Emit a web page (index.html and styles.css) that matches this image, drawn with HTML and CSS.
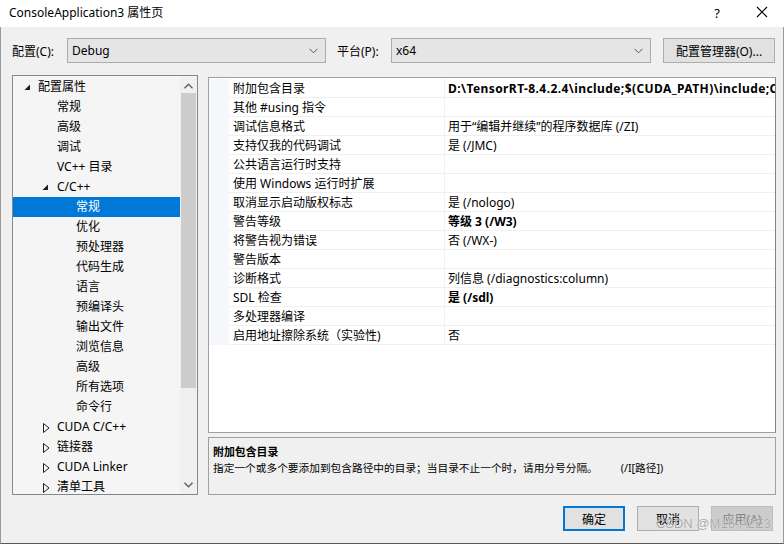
FILE: index.html
```html
<!DOCTYPE html>
<html lang="zh-CN">
<head>
<meta charset="utf-8">
<link rel="stylesheet" href="styles.css">
</head>
<body>
<div class="window">
  <div class="titlebar">
    <span class="title">ConsoleApplication3 属性页</span>
    <span class="help">?</span>
    <svg class="close" width="12" height="12" viewBox="0 0 12 12"><path d="M1 1L11 11M11 1L1 11" stroke="#000" stroke-width="1.1" fill="none"/></svg>
  </div>
  <div class="frame">
    <div class="toolbar">
      <span class="lbl lbl-cfg">配置(C):</span>
      <div class="combo combo-cfg"><span>Debug</span><svg class="chev" width="9" height="6" viewBox="0 0 9 6"><path d="M0.5 0.8L4.5 4.8L8.5 0.8" stroke="#505050" stroke-width="1" fill="none"/></svg></div>
      <span class="lbl lbl-plat">平台(P):</span>
      <div class="combo combo-plat"><span>x64</span><svg class="chev" width="9" height="6" viewBox="0 0 9 6"><path d="M0.5 0.8L4.5 4.8L8.5 0.8" stroke="#505050" stroke-width="1" fill="none"/></svg></div>
      <button class="btn btn-mgr">配置管理器(O)...</button>
    </div>
    <div class="main">
      <div class="tree">
        <ul class="items">
          <li class="l0"><svg class="exp" width="7" height="7" viewBox="0 0 7 7"><path d="M6 0.5V6H0.5Z" fill="#1e1e1e"/></svg>配置属性</li>
          <li class="l1">常规</li>
          <li class="l1">高级</li>
          <li class="l1">调试</li>
          <li class="l1">VC++ 目录</li>
          <li class="l1"><svg class="exp" width="7" height="7" viewBox="0 0 7 7"><path d="M6 0.5V6H0.5Z" fill="#1e1e1e"/></svg>C/C++</li>
          <li class="l2 sel">常规</li>
          <li class="l2">优化</li>
          <li class="l2">预处理器</li>
          <li class="l2">代码生成</li>
          <li class="l2">语言</li>
          <li class="l2">预编译头</li>
          <li class="l2">输出文件</li>
          <li class="l2">浏览信息</li>
          <li class="l2">高级</li>
          <li class="l2">所有选项</li>
          <li class="l2">命令行</li>
          <li class="l1"><svg class="col" width="7" height="10" viewBox="0 0 7 10"><path d="M0.5 0.5L6 5L0.5 9.5Z" stroke="#1e1e1e" stroke-width="1" fill="none"/></svg>CUDA C/C++</li>
          <li class="l1"><svg class="col" width="7" height="10" viewBox="0 0 7 10"><path d="M0.5 0.5L6 5L0.5 9.5Z" stroke="#1e1e1e" stroke-width="1" fill="none"/></svg>链接器</li>
          <li class="l1"><svg class="col" width="7" height="10" viewBox="0 0 7 10"><path d="M0.5 0.5L6 5L0.5 9.5Z" stroke="#1e1e1e" stroke-width="1" fill="none"/></svg>CUDA Linker</li>
          <li class="l1"><svg class="col" width="7" height="10" viewBox="0 0 7 10"><path d="M0.5 0.5L6 5L0.5 9.5Z" stroke="#1e1e1e" stroke-width="1" fill="none"/></svg>清单工具</li>
        </ul>
        <div class="vscroll">
          <svg class="arr" width="9" height="6" viewBox="0 0 9 6"><path d="M0.5 5.2L4.5 1.2L8.5 5.2" stroke="#606060" stroke-width="1.4" fill="none"/></svg>
          <div class="track"><div class="thumb"></div></div>
          <svg class="arr" width="9" height="6" viewBox="0 0 9 6"><path d="M0.5 0.8L4.5 4.8L8.5 0.8" stroke="#606060" stroke-width="1.4" fill="none"/></svg>
        </div>
      </div>
      <div class="right">
        <div class="grid">
          <div class="row"><div class="gut"></div><div class="name">附加包含目录</div><div class="val b wide">D:\TensorRT-8.4.2.4\include;$(CUDA_PATH)\include;C</div></div>
          <div class="row"><div class="gut"></div><div class="name">其他 #using 指令</div><div class="val"></div></div>
          <div class="row"><div class="gut"></div><div class="name">调试信息格式</div><div class="val">用于“编辑并继续”的程序数据库 (/ZI)</div></div>
          <div class="row"><div class="gut"></div><div class="name">支持仅我的代码调试</div><div class="val">是 (/JMC)</div></div>
          <div class="row"><div class="gut"></div><div class="name">公共语言运行时支持</div><div class="val"></div></div>
          <div class="row"><div class="gut"></div><div class="name">使用 Windows 运行时扩展</div><div class="val"></div></div>
          <div class="row"><div class="gut"></div><div class="name">取消显示启动版权标志</div><div class="val">是 (/nologo)</div></div>
          <div class="row"><div class="gut"></div><div class="name">警告等级</div><div class="val b">等级 3 (/W3)</div></div>
          <div class="row"><div class="gut"></div><div class="name">将警告视为错误</div><div class="val">否 (/WX-)</div></div>
          <div class="row"><div class="gut"></div><div class="name">警告版本</div><div class="val"></div></div>
          <div class="row"><div class="gut"></div><div class="name">诊断格式</div><div class="val">列信息 (/diagnostics:column)</div></div>
          <div class="row"><div class="gut"></div><div class="name">SDL 检查</div><div class="val b">是 (/sdl)</div></div>
          <div class="row"><div class="gut"></div><div class="name">多处理器编译</div><div class="val"></div></div>
          <div class="row"><div class="gut"></div><div class="name">启用地址擦除系统（实验性)</div><div class="val">否</div></div>
        </div>
        <div class="desc">
          <div class="desc-title">附加包含目录</div>
          <div class="desc-text"><span>指定一个或多个要添加到包含路径中的目录；当目录不止一个时，请用分号分隔。</span><span class="sw">(/I[路径])</span></div>
        </div>
      </div>
    </div>
    <div class="footer">
      <button class="btn btn-ok">确定</button>
      <button class="btn">取消</button>
      <button class="btn btn-dis">应用(A)</button>
      <span class="wm">CSDN @M16-A2E3</span>
    </div>
  </div>
</div>
</body>
</html>
```

FILE: styles.css
```css
* { box-sizing: border-box; }
html, body { margin: 0; padding: 0; }
body {
  width: 784px;
  height: 544px;
  overflow: hidden;
  font-family: "Segoe UI", "Noto Sans", "Noto Sans CJK SC", sans-serif;
  font-size: 12px;
  color: #000;
  background: #f0f0f0;
}
.window { width: 784px; height: 544px; display: flex; flex-direction: column; }
.titlebar {
  height: 27px;
  background: #fff;
  display: flex;
  align-items: center;
  padding-left: 9px;
  position: relative;
}
.title { font-size: 12px; flex: 1; margin-top: -3px; }
.help { font-size: 13px; margin-right: 36px; margin-top: -2px; }
.close { margin-right: 16px; margin-top: -3px; }
.frame {
  flex: 1;
  border-left: 1px solid #9a9a9a;
  border-right: 1px solid #9a9a9a;
  border-bottom: 1px solid #5a5a5a;
  background: #f0f0f0;
  display: flex;
  flex-direction: column;
  position: relative;
}
.toolbar {
  display: flex;
  align-items: center;
  padding: 11px 0 0 11px;
  height: 36px;
}
.lbl { white-space: nowrap; }
.lbl-cfg { width: 55px; }
.lbl-plat { width: 54px; margin-left: 11px; }
.combo {
  height: 25px;
  background: #e5e5e5;
  border: 1px solid #acacac;
  display: flex;
  align-items: center;
  justify-content: space-between;
  padding: 0 5px 0 4px;
}
.combo-cfg { width: 259px; }
.combo-plat { width: 260px; }
.chev { margin-right: 2px; }
.btn {
  font-family: inherit;
  font-size: 12px;
  color: #000;
  height: 25px;
  background: #e1e1e1;
  border: 1px solid #adadad;
  padding: 0;
}
.btn-mgr { width: 112px; margin-left: 12px; }
.main {
  display: flex;
  margin-top: 12px;
  padding-left: 11px;
  height: 420px;
}
.tree {
  width: 186px;
  height: 420px;
  border: 1px solid #828790;
  background: #f5f5f5;
  display: flex;
}
.items {
  list-style: none;
  margin: 0;
  padding: 1px 0 0 0;
  flex: 1;
  overflow: hidden;
}
.items li {
  height: 20px;
  line-height: 20px;
  position: relative;
  white-space: nowrap;
}
.l0 { padding-left: 25px; }
.l1 { padding-left: 44px; }
.l2 { padding-left: 63px; }
.exp { position: absolute; top: 7px; }
.l0 .exp { left: 11px; }
.l1 .exp { left: 29px; }
.col { position: absolute; top: 6px; left: 30px; }
.sel { background: #0078d7; color: #fff; }
.vscroll {
  width: 17px;
  display: flex;
  flex-direction: column;
  align-items: center;
  background: #f0f0f0;
  padding: 7px 0 6px;
}
.track { flex: 1; width: 100%; padding: 4px 1px 0; }
.thumb { height: 295px; background: #cdcdcd; }
.arr { flex: none; }
.right {
  margin-left: 10px;
  width: 568px;
  display: flex;
  flex-direction: column;
}
.grid {
  margin-top: 2px;
  height: 357px;
  border: 1px solid #a0a0a0;
  border-right-color: #828282;
  background: #fff;
  padding-top: 1px;
}
.row {
  display: flex;
  height: 19px;
  line-height: 19px;
}
.gut { width: 20px; background: #f5f7fb; }
.name {
  width: 216px;
  padding-left: 4px;
  border-bottom: 1px solid #f0f0f0;
  border-right: 1px solid #f0f0f0;
  white-space: nowrap;
}
.val {
  flex: 1;
  padding-left: 3px;
  border-bottom: 1px solid #f0f0f0;
  white-space: nowrap;
  overflow: hidden;
}
.b { font-weight: bold; }
.wide { letter-spacing: 0.42px; }
.desc {
  margin-top: 4px;
  height: 58px;
  border: 1px solid #a0a0a0;
  background: #f0f0f0;
  padding: 6px 0 0 4px;
  font-size: 10.7px;
}
.desc-title { font-weight: bold; line-height: 16px; font-size: 10.9px; }
.desc-text { line-height: 16px; white-space: nowrap; }
.sw { margin-left: 23px; }
.footer {
  display: flex;
  justify-content: flex-end;
  padding: 11px 10px 0 0;
  gap: 12px;
  position: relative;
}
.footer .btn { width: 62px; height: 25px; }
.btn-ok { border: 2px solid #0078d7; }
.btn-dis { background: #cccccc; border-color: #bfbfbf; color: #838383; }
.wm {
  position: absolute;
  right: 12px;
  top: 21px;
  font-family: "Liberation Sans", sans-serif;
  font-size: 13px;
  color: #a8a8a8;
  text-shadow: 0 0 1px #fff;
  pointer-events: none;
}
```
